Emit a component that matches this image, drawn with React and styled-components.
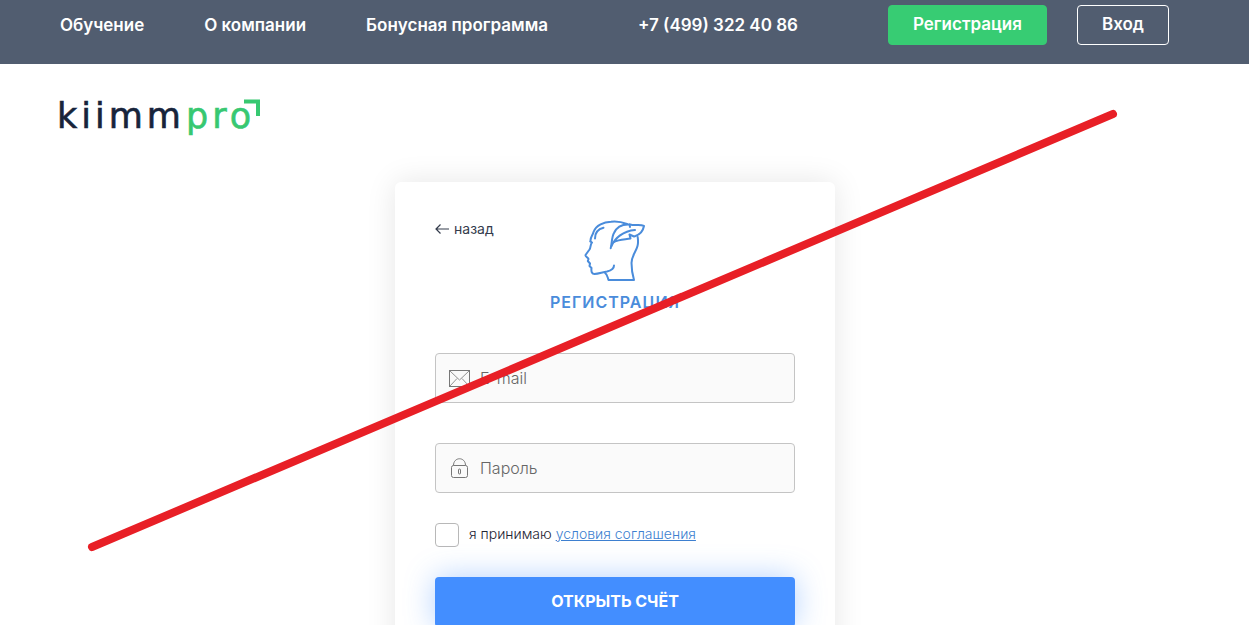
import React from "react";
import styled, { createGlobalStyle } from "styled-components";

const GlobalStyle = createGlobalStyle`
  *, *::before, *::after { box-sizing: border-box; }
  body {
    margin: 0;
    background: #ffffff;
    color: #343c4c;
    font-family: Inter, "Liberation Sans", sans-serif;
  }
`;

const Page = styled.div`
  position: relative;
  height: 100vh;
  overflow: hidden;
`;

const Header = styled.header`
  display: flex;
  align-items: center;
  justify-content: space-between;
  padding: 5px 80px 19px 60px;
  background: #515d70;
  white-space: nowrap;
`;

const Nav = styled.nav`
  display: flex;
  gap: 60px;
`;

const NavLink = styled.a`
  color: #ffffff;
  font-size: 17px;
  font-weight: 600;
  line-height: 24px;
  text-decoration: none;
`;

const Actions = styled.div`
  display: flex;
  gap: 30px;
`;

const HeaderButton = styled.button`
  height: 40px;
  padding: 0 24px 2px;
  border: 1px solid ${(p) => (p.$primary ? "#37cc73" : "#ffffff")};
  border-radius: 4px;
  background: ${(p) => (p.$primary ? "#37cc73" : "transparent")};
  color: #ffffff;
  font: 600 17px/24px Inter, sans-serif;
`;

const Main = styled.main`
  display: flex;
  flex-direction: column;
  padding: 28px 79px 0 56px;
`;

const Logo = styled.a`
  display: flex;
  align-self: flex-start;
  height: 48px;
  text-decoration: none;
`;

const Card = styled.form`
  align-self: center;
  width: 440px;
  margin-top: 42px;
  margin-left: 4px;
  padding: 38px 40px 40px;
  border-radius: 6px;
  background: #ffffff;
  box-shadow: 0 0 30px rgba(0, 0, 0, 0.1);
`;

const CardHead = styled.div`
  display: grid;
  grid-template-columns: 1fr auto 1fr;
  align-items: start;
`;

const BackLink = styled.a`
  display: flex;
  align-items: center;
  gap: 5px;
  color: #343c4c;
  font-size: 14px;
  line-height: 18px;
  text-decoration: none;
`;

const Title = styled.h1`
  margin: 8px 0 39px;
  color: #4a8cdb;
  font-size: 16px;
  font-weight: 600;
  letter-spacing: 1px;
  line-height: 24px;
  text-align: center;
`;

const Field = styled.label`
  display: flex;
  align-items: center;
  gap: 10px;
  height: 50px;
  margin-bottom: ${(p) => (p.$last ? 30 : 40)}px;
  padding: 0 13px;
  border: 1px solid #c4c4c4;
  border-radius: 4px;
  background: #fafafa;
`;

const Input = styled.input`
  flex: 1;
  min-width: 0;
  padding: 0;
  border: 0;
  outline: 0;
  background: transparent;
  color: #343c4c;
  font: 300 16px/24px Inter, sans-serif;
  &::placeholder { color: #666666; opacity: 1; }
`;

const Consent = styled.div`
  display: flex;
  align-items: flex-start;
  gap: 10px;
  margin-bottom: 30px;
  font-size: 14px;
  font-weight: 300;
  line-height: 22px;
`;

const Checkbox = styled.input`
  appearance: none;
  width: 24px;
  height: 24px;
  margin: 0;
  border: 1px solid #b8b8b8;
  border-radius: 4px;
  background: #ffffff;
`;

const ConsentLabel = styled.label`
  color: #1d2433;
`;

const TermsLink = styled.a`
  color: #3d7fd0;
`;

const Submit = styled.button`
  width: 100%;
  height: 50px;
  padding: 0 0 2px;
  border: 0;
  border-radius: 4px;
  background: #438eff;
  box-shadow: 0 0 30px rgba(67, 142, 255, 0.4);
  color: #ffffff;
  font: 700 16px/24px Inter, sans-serif;
`;

const Strike = styled.svg`
  position: absolute;
  inset: 0;
  width: 100%;
  height: 100%;
  pointer-events: none;
`;

const LogoMark = () => (
  <svg width="208" height="48" viewBox="0 0 208 48" fontFamily="DejaVu Sans, sans-serif" fontSize="35" strokeWidth=".6">
    <text x="1" y="36" fill="#17243b" stroke="#17243b" letterSpacing="4">kiimm</text>
    <text x="130" y="36" fill="#37c871" stroke="#37c871" letterSpacing="4">pro</text>
    <path d="M188 9.500H202V24" fill="none" stroke="#37c871" strokeWidth="4" />
  </svg>
);

const ArrowIcon = () => (
  <svg width="14" height="12" viewBox="0 0 14 12" fill="none" stroke="#343c4c" strokeWidth="1.2">
    <path d="M14 6H1M5.500 1.500L1 6l4.500 4.500" />
  </svg>
);

const HeadIcon = () => (
  <svg width="62" height="62" viewBox="0 0 62 62" fill="none" stroke="#4a8cdb" strokeWidth="2" strokeLinecap="round" strokeLinejoin="round">
    <path d="M6.500 21.500C6 17 9 15 9.500 12C12 5 20 2 27 1.700C33 1 38 2 43 4" />
    <path d="M6.500 21.500L8 22.500C6 25 7 27 5.500 29.500L1.500 35C1 37 4 37 4.500 39L3.800 41L6 43.500L5.500 46L7.500 48C7 52 8 54 10.500 54C15 53.500 19 52 23 51.500C27 50.500 30 48.500 30 45.500" />
    <path d="M20.700 52.500C23.500 54.500 23.500 57 24.500 60H50C48 53 47.500 49 47.500 43C47.500 36 52 32 53.500 26C54.500 22 54 20 53.700 17" />
    <path d="M11 18.500C11 13 14 9 19.500 7.700" />
    <path d="M26.700 28.300C28 24 27.500 17 30 13C33 6 39 4 46 4.500C51 6 56 4 60 6C59 11 57 14 51.500 16L50 16.500L45.500 14.500L46.500 18.500C41 19.500 35 19 30 22" />
    <path d="M27.500 26C31 18 39 11 51 10M45.500 4.500L46 7" />
  </svg>
);

const MailIcon = () => (
  <svg width="21" height="17" viewBox="0 0 21 17" fill="none" stroke="#777777">
    <rect x=".5" y=".5" width="20" height="16" />
    <path d="M1 1l9.500 9L20 1M1 16l7-7.500M20 16l-7-7.500" strokeWidth=".8" />
  </svg>
);

const LockIcon = () => (
  <svg width="21" height="21" viewBox="0 0 21 21" fill="none" stroke="#777777">
    <rect x="2.500" y="7.500" width="16" height="12" rx="2" />
    <path d="M4.500 7.500C4.500-1.500 16.500-1.500 16.500 7.500" />
    <rect x="9.500" y="11" width="2" height="5" rx="1" />
  </svg>
);

export default function App() {
  return (
    <>
      <GlobalStyle />
      <Page>
        <Header>
          <Nav>
            <NavLink href="#learn">Обучение</NavLink>
            <NavLink href="#about">О компании</NavLink>
            <NavLink href="#bonus">Бонусная программа</NavLink>
          </Nav>
          <NavLink href="tel:+74993224086">+7 (499) 322 40 86</NavLink>
          <Actions>
            <HeaderButton type="button" $primary>Регистрация</HeaderButton>
            <HeaderButton type="button">Вход</HeaderButton>
          </Actions>
        </Header>
        <Main>
          <Logo href="#home"><LogoMark /></Logo>
          <Card>
            <CardHead>
              <BackLink href="#back"><ArrowIcon />назад</BackLink>
              <HeadIcon />
            </CardHead>
            <Title>РЕГИСТРАЦИЯ</Title>
            <Field>
              <MailIcon />
              <Input type="email" placeholder="E-mail" aria-label="E-mail" />
            </Field>
            <Field $last>
              <LockIcon />
              <Input type="password" placeholder="Пароль" aria-label="Пароль" />
            </Field>
            <Consent>
              <Checkbox type="checkbox" id="consent" />
              <span>
                <ConsentLabel htmlFor="consent">я принимаю</ConsentLabel>{" "}
                <TermsLink href="#terms">условия соглашения</TermsLink>
              </span>
            </Consent>
            <Submit type="submit">ОТКРЫТЬ СЧЁТ</Submit>
          </Card>
        </Main>
        <Strike viewBox="0 0 1249 625" aria-hidden="true">
          <path d="M92 547L1113 114" stroke="#e81f26" strokeWidth="8" strokeLinecap="round" />
        </Strike>
      </Page>
    </>
  );
}
